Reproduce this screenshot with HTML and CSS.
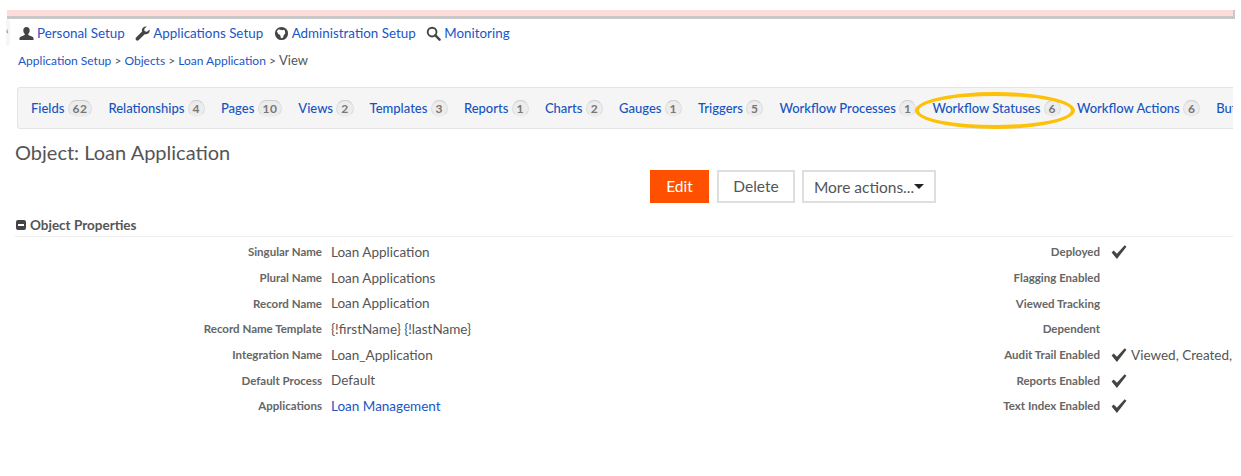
FILE: index.html
```html
<!DOCTYPE html>
<html lang="en">
<head>
  <meta charset="UTF-8">
  <title>Object: Loan Application</title>
  <link rel="stylesheet" href="styles.css">
</head>
<body>
<div class="page">
  <div class="alert-strip"></div>

  <div class="topnav">
    <span class="side-tab">‹</span>
    <a class="topnav-item" href="#">
      <svg class="ico" viewBox="0 0 16 16"><path fill="#444" d="M8 1c2.2 0 3.4 1.600 3.400 3.700 0 1.500-.6 2.800-1.500 3.600v1.300l4.300 1.900c.8.400 1.300 1 1.300 1.900V15H.5v-1.600c0-.9.500-1.500 1.300-1.900l4.300-1.900V8.300C5.200 7.500 4.600 6.200 4.600 4.700 4.600 2.600 5.800 1 8 1z"/></svg>
      Personal Setup</a>
    <a class="topnav-item" href="#">
      <svg class="ico" viewBox="0 0 16 16"><path fill="#444" d="M15.600 3.700c.3 1.500-.1 3-1.200 4-1.100 1.100-2.600 1.400-4 1L4 15c-.8.800-2 .800-2.800 0s-.8-2 0-2.800l6.300-6.400c-.4-1.400-.1-2.900 1-4 1-1.100 2.500-1.500 4-1.200L9.800 3.300l.5 2.400 2.400.5 2.900-2.500z"/></svg>
      Applications Setup</a>
    <a class="topnav-item" href="#">
      <svg class="ico" viewBox="0 0 16 16"><path fill="#444" fill-rule="evenodd" d="M8 1a7 7 0 1 1 0 14A7 7 0 0 1 8 1zM5 3.500 3 5.500l1.500 3 2 1 1 3.500 2-.5 1-3 1.500-1.500-.5-3.500-1.500-.5-1 .5L6.500 4z"/></svg>
      Administration Setup</a>
    <a class="topnav-item" href="#">
      <svg class="ico" viewBox="0 0 16 16"><circle cx="6.500" cy="6.500" r="4.700" fill="none" stroke="#444" stroke-width="2"/><path d="M10 10l4.500 4.500" stroke="#444" stroke-width="2.600" stroke-linecap="round"/></svg>
      Monitoring</a>
  </div>

  <div class="crumbs">
    <a href="#">Application Setup</a> &gt; <a href="#">Objects</a> &gt; <a href="#">Loan Application</a> &gt; <span class="crumb-here">View</span>
  </div>

  <div class="tabs">
    <a class="tab" href="#">Fields <span class="count">62</span></a>
    <a class="tab" href="#">Relationships <span class="count">4</span></a>
    <a class="tab" href="#">Pages <span class="count">10</span></a>
    <a class="tab" href="#">Views <span class="count">2</span></a>
    <a class="tab" href="#">Templates <span class="count">3</span></a>
    <a class="tab" href="#">Reports <span class="count">1</span></a>
    <a class="tab" href="#">Charts <span class="count">2</span></a>
    <a class="tab" href="#">Gauges <span class="count">1</span></a>
    <a class="tab" href="#">Triggers <span class="count">5</span></a>
    <a class="tab" href="#">Workflow Processes <span class="count">1</span></a>
    <a class="tab" href="#">Workflow Statuses <span class="count">6</span></a>
    <a class="tab" href="#">Workflow Actions <span class="count">6</span></a>
    <a class="tab" href="#">Buttons</a>
  </div>
  <div class="callout"></div>

  <h1 class="title">Object: Loan Application</h1>

  <div class="actions">
    <button class="btn btn-edit">Edit</button>
    <button class="btn">Delete</button>
    <button class="btn btn-more">More actions...<span class="caret"></span></button>
  </div>

  <div class="section-head">
    <span class="minus"></span>
    Object Properties
  </div>

  <div class="props">
    <div class="prop-col">
      <div class="row"><span class="lbl">Singular Name</span><span class="val">Loan Application</span></div>
      <div class="row"><span class="lbl">Plural Name</span><span class="val">Loan Applications</span></div>
      <div class="row"><span class="lbl">Record Name</span><span class="val">Loan Application</span></div>
      <div class="row"><span class="lbl">Record Name Template</span><span class="val">{!firstName} {!lastName}</span></div>
      <div class="row"><span class="lbl">Integration Name</span><span class="val">Loan_Application</span></div>
      <div class="row"><span class="lbl">Default Process</span><span class="val">Default</span></div>
      <div class="row"><span class="lbl">Applications</span><span class="val"><a href="#">Loan Management</a></span></div>
    </div>
    <div class="prop-col prop-col-right">
      <div class="row"><span class="lbl">Deployed</span><span class="val"><svg class="check" viewBox="0 0 16 16"><path d="M1.500 9l2-2 3 3.200L13.800 2l1.700 1.500L6.500 15z" fill="#444"/></svg></span></div>
      <div class="row"><span class="lbl">Flagging Enabled</span><span class="val"></span></div>
      <div class="row"><span class="lbl">Viewed Tracking</span><span class="val"></span></div>
      <div class="row"><span class="lbl">Dependent</span><span class="val"></span></div>
      <div class="row"><span class="lbl">Audit Trail Enabled</span><span class="val"><svg class="check" viewBox="0 0 16 16"><path d="M1.500 9l2-2 3 3.200L13.800 2l1.700 1.500L6.500 15z" fill="#444"/></svg> Viewed, Created,</span></div>
      <div class="row"><span class="lbl">Reports Enabled</span><span class="val"><svg class="check" viewBox="0 0 16 16"><path d="M1.500 9l2-2 3 3.200L13.800 2l1.700 1.500L6.500 15z" fill="#444"/></svg></span></div>
      <div class="row"><span class="lbl">Text Index Enabled</span><span class="val"><svg class="check" viewBox="0 0 16 16"><path d="M1.500 9l2-2 3 3.200L13.800 2l1.700 1.500L6.500 15z" fill="#444"/></svg></span></div>
    </div>
  </div>
</div>
</body>
</html>
```

FILE: styles.css
```css
html, body {
  margin: 0;
  background: #fff;
}
body {
  font-family: Lato, "Open Sans", sans-serif;
  font-size: 14px;
  color: #555;
}
a {
  color: #1a56c4;
  text-decoration: none;
}
.page {
  position: relative;
  width: 1241px;
  height: 476px;
  overflow: hidden;
  background: #fff;
}
.alert-strip {
  margin: 10px 0 0 7px;
  width: 1226px;
  height: 6px;
  background: #fedcd9;
  border-bottom: 3px solid #c8c8c8;
  border-right: 2px solid #c8c8c8;
}
.topnav {
  display: flex;
  align-items: center;
  height: 28px;
  padding-left: 19px;
  gap: 10.5px;
  position: relative;
}
.side-tab {
  position: absolute;
  left: 6px;
  top: 0;
  width: 4px;
  height: 27px;
  font-size: 9px;
  line-height: 24px;
  background: #f6f6f6;
  border-radius: 0 4px 4px 0;
  color: #555;
}
.topnav-item {
  display: flex;
  align-items: center;
  gap: 3px;
  font-size: 13.4px;
  white-space: nowrap;
}
.ico {
  width: 15px;
  height: 15px;
}
.crumbs {
  margin: 5px 0 0 18px;
  height: 16px;
  line-height: 16px;
  font-size: 12px;
  color: #555;
}
.crumb-here {
  font-size: 13px;
}
.tabs {
  display: flex;
  align-items: center;
  gap: 16px;
  box-sizing: border-box;
  width: 1216px;
  height: 42px;
  margin: 19px 0 0 17px;
  padding-left: 13px;
  background: #f5f5f5;
  border: 1px solid #e4e4e4;
  border-right: 0;
  border-radius: 3px 0 0 3px;
  white-space: nowrap;
  overflow: hidden;
}
.tab {
  font-size: 13px;
  font-weight: 500;
  color: #1554c0;
}
.count {
  display: inline-block;
  padding: 0 3.9px;
  height: 15px;
  line-height: 15px;
  text-align: center;
  font-size: 12px;
  letter-spacing: .5px;
  font-weight: 700;
  color: #777;
  background: #ececec;
  border: 1px solid #ddd;
  border-top-color: #ccc;
  border-bottom-color: #eee;
  border-radius: 9px;
}
.callout {
  position: absolute;
  left: 915px;
  top: 92px;
  box-sizing: border-box;
  width: 160px;
  height: 37px;
  border: 4px solid #fdc107;
  border-radius: 50%;
}
.title {
  margin: 11px 0 0 15px;
  font-size: 20px;
  line-height: 24px;
  font-weight: 400;
  color: #555;
}
.actions {
  display: flex;
  gap: 8px;
  margin: 6px 0 0 650px;
}
.btn {
  box-sizing: border-box;
  height: 33px;
  width: 78px;
  padding: 0 0 2px;
  font-family: inherit;
  font-size: 15.5px;
  color: #555;
  background: #fff;
  border: 2px solid #dedede;
}
.btn-edit {
  width: 59px;
  color: #fff;
  background: #ff5000;
  border-color: #ff5000;
}
.btn-more {
  width: 134px;
  margin-left: -1px;
  padding: 0;
}
.caret {
  display: inline-block;
  width: 0;
  height: 0;
  margin: 0 0 4px 0;
  vertical-align: middle;
  border: 5px solid transparent;
  border-top-color: #222;
  border-bottom-width: 0;
}
.section-head {
  display: flex;
  align-items: center;
  gap: 4px;
  box-sizing: border-box;
  height: 34px;
  width: 1218px;
  margin-left: 15px;
  padding: 10px 0 0 1px;
  font-size: 13.5px;
  font-weight: 700;
  color: #555;
  border-bottom: 1px solid #ececec;
}
.minus {
  position: relative;
  width: 10px;
  height: 10px;
  background: #444;
  border-radius: 2px;
}
.minus::after {
  content: "";
  position: absolute;
  left: 2px;
  right: 2px;
  top: 4px;
  height: 2px;
  background: #fff;
}
.props {
  display: flex;
  padding-top: 2px;
}
.prop-col {
  flex: none;
  width: 1100px;
}
.prop-col-right {
  margin-left: -1100px;
  width: 1233px;
}
.row {
  display: flex;
  align-items: center;
  height: 25.7px;
  white-space: nowrap;
}
.lbl {
  flex: none;
  width: 322px;
  text-align: right;
  font-size: 11.5px;
  font-weight: 700;
  color: #666;
}
.val {
  margin-left: 9px;
  font-size: 13.5px;
  color: #555;
}
.prop-col-right .lbl {
  width: 1100px;
}
.prop-col-right .val {
  margin-left: 10px;
  display: flex;
  align-items: center;
  gap: 4px;
}
.check {
  width: 17px;
  height: 17px;
}
```
